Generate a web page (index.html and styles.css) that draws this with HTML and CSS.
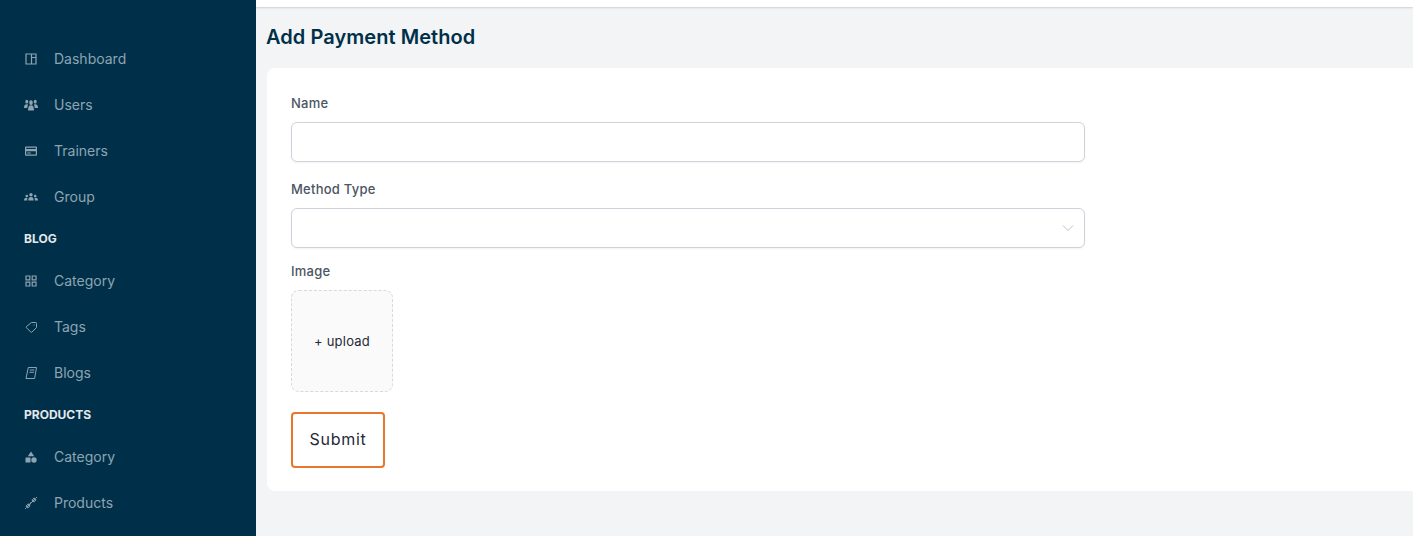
FILE: index.html
```html
<!DOCTYPE html>
<html lang="en">
<head>
<meta charset="utf-8">
<title>Add Payment Method</title>
<link rel="stylesheet" href="styles.css">
</head>
<body>
<div class="app">
  <aside class="sidebar">
    <nav class="nav">
      <a class="nav-item"><svg class="icon" viewBox="0 0 14 14"><path class="line line-bold" d="M2 2h10v10H2zM7.500 2v10M7.500 5.500H12"/></svg><span>Dashboard</span></a>
      <a class="nav-item"><svg class="icon" viewBox="0 0 14 14"><g class="fill" transform="translate(0 -1.900) scale(1 1.320)"><circle cx="2.800" cy="4.200" r="1.500"/><circle cx="11.200" cy="4.200" r="1.500"/><circle cx="7" cy="5" r="1.800"/><path d="M0 9c0-2 1-2.800 2.800-2.800.6 0 1 .1 1.300.3C3.500 7.200 3.300 8 3.300 9zM14 9c0-2-1-2.800-2.800-2.800-.6 0-1 .1-1.300.3.600.7.800 1.500.8 2.500zM4 11c0-2.600 1-4 3-4s3 1.400 3 4z"/></g></svg><span>Users</span></a>
      <a class="nav-item"><svg class="icon" viewBox="0 0 14 14"><path class="fill" fill-rule="evenodd" d="M2.300 2.500h9.400c.8 0 1.300.5 1.300 1.300v6.700c0 .8-.5 1.300-1.300 1.300H2.300c-.8 0-1.300-.5-1.300-1.300V3.800c0-.8.5-1.300 1.300-1.300zM2.200 3.800v1.200h9.600V3.800zM2.200 7.200v3.200h9.600V7.200zM3.200 8.500h3.600v1H3.200z"/></svg><span>Trainers</span></a>
      <a class="nav-item"><svg class="icon" viewBox="0 0 14 14"><g class="fill"><circle cx="7" cy="4.800" r="1.700"/><circle cx="2.800" cy="6" r="1.300"/><circle cx="11.200" cy="6" r="1.300"/><path d="M4.300 10.500c0-2.400 1-3.500 2.700-3.500s2.700 1.100 2.700 3.500zM0 10.500c0-1.800.8-2.800 2.200-2.800.4 0 .8.100 1.200.2-.2.700-.3 1.600-.3 2.600zM14 10.500c0-1.800-.8-2.800-2.200-2.800-.4 0-.8.100-1.200.2.200.7.300 1.600.3 2.600z"/></g></svg><span>Group</span></a>
      <div class="nav-heading">BLOG</div>
      <a class="nav-item"><svg class="icon" viewBox="0 0 14 14"><path class="line line-bold" d="M2 2h3.800v3.800H2zM8.200 2H12v3.800H8.200zM2 8.200h3.800V12H2zM8.200 8.200H12V12H8.200z"/></svg><span>Category</span></a>
      <a class="nav-item"><svg class="icon" viewBox="0 0 14 14"><path class="line" d="M7.500 2.500h4.300c.4 0 .7.300.7.700v4.300L8 12c-.4.400-.9.400-1.300 0L2.500 7.800c-.4-.4-.4-.9 0-1.300z"/><circle class="fill" cx="10" cy="5" r=".6"/></svg><span>Tags</span></a>
      <a class="nav-item"><svg class="icon" viewBox="0 0 14 14"><path class="line" d="M4.300 1.500h8.200l-1.900 11H2zM5.800 4h4.500M5.400 6.300h4.500"/></svg><span>Blogs</span></a>
      <div class="nav-heading">PRODUCTS</div>
      <a class="nav-item"><svg class="icon" viewBox="0 0 14 14"><g class="fill"><path d="M7 1.500l3.200 4.800H3.800z"/><rect x="1.500" y="7.500" width="5" height="5" rx=".5"/><circle cx="10" cy="10" r="2.700"/></g></svg><span>Category</span></a>
      <a class="nav-item"><svg class="icon" viewBox="0 0 14 14"><path class="line" d="M3.500 10.500l7-7"/><path class="line line-heavy" d="M2 9.500l2.500 2.500M3.500 8l2.500 2.500M8 3.500l2.500 2.500M9.500 2L12 4.500"/><path class="line" d="M1 13l1.500-1.500M11.500 2.500L13 1M6 8.500l-1-1M7.500 7l-1-1"/></svg><span>Products</span></a>
    </nav>
  </aside>
  <div class="main">
    <div class="topbar"></div>
    <div class="content">
      <h1 class="title">Add Payment Method</h1>
      <form class="card">
        <div class="field">
          <label class="label">Name</label>
          <div class="control"></div>
        </div>
        <div class="field">
          <label class="label">Method Type</label>
          <div class="control select">
            <svg class="chevron" viewBox="0 0 12 8"><path d="M1 1.500l5 5 5-5"/></svg>
          </div>
        </div>
        <div class="field">
          <label class="label">Image</label>
          <div class="upload">+ upload</div>
        </div>
        <button class="submit" type="button">Submit</button>
      </form>
    </div>
  </div>
</div>
</body>
</html>
```
FILE: styles.css
```css
* { box-sizing: border-box; }
html, body { margin: 0; height: 100%; }
body { font-family: Inter, "Liberation Sans", sans-serif; background: #f3f4f6; overflow: hidden; }
.app { display: flex; height: 536px; }
.sidebar { width: 256px; flex: none; background: #003049; padding-top: 36px; overflow: hidden; }
.nav { display: flex; flex-direction: column; }
.nav-item { display: flex; align-items: center; gap: 16px; height: 46px; padding-left: 24px; color: #8ea4b3; font-size: 14px; line-height: 20px; flex: none; }
.icon { width: 14px; height: 14px; flex: none; }
.line { fill: none; stroke: #8ea4b3; stroke-width: 1; }
.line-bold { stroke-width: 1.200; }
.line-heavy { stroke-width: 1.600; }
.fill { fill: #8ea4b3; }
.nav-heading { height: 38px; flex: none; display: flex; align-items: center; padding: 0 0 2px 24px; font-size: 12px; font-weight: 700; color: #e5e9ec; }
.main { flex: 1; min-width: 0; display: flex; flex-direction: column; }
.topbar { height: 7px; flex: none; background: #fff; box-shadow: 0 1px 2px rgba(0, 0, 0, .15); }
.content { padding: 15px 0 0 10px; }
.title { margin: 0 0 16px; font-size: 20px; line-height: 30px; font-weight: 600; letter-spacing: .05px; color: #003049; }
.card { margin: 0 -8px 0 1px; background: #fff; border-radius: 8px; padding: 24px; height: 423px; }
.field { display: flex; flex-direction: column; align-items: flex-start; }
.label { display: block; height: 30px; font-size: 13px; line-height: 22px; font-weight: 500; letter-spacing: .25px; color: #4b5563; }
.control { width: 794px; height: 40px; margin-bottom: 16px; background: #fff; border: 1px solid #d1d1db; border-radius: 6px; box-shadow: 0 1px 2px rgba(0, 0, 0, .05); display: flex; align-items: center; justify-content: flex-end; padding-right: 10px; }
.select { margin-bottom: 12px; }
.chevron { width: 12px; height: 8px; fill: none; stroke: #bdbdc8; stroke-width: 1; }
.upload { width: 102px; height: 102px; background: #fafafa; border: 1px dashed #d9d9d9; border-radius: 8px; display: flex; align-items: center; justify-content: center; font-size: 13px; letter-spacing: .2px; color: #1f2937; }
.submit { display: block; margin-top: 20px; width: 94px; height: 56px; background: #fff; border: 2px solid #e8762c; border-radius: 4px; font-family: inherit; font-size: 16px; font-weight: 400; letter-spacing: .7px; color: #1f2937; padding: 0 0 2px; }
```
